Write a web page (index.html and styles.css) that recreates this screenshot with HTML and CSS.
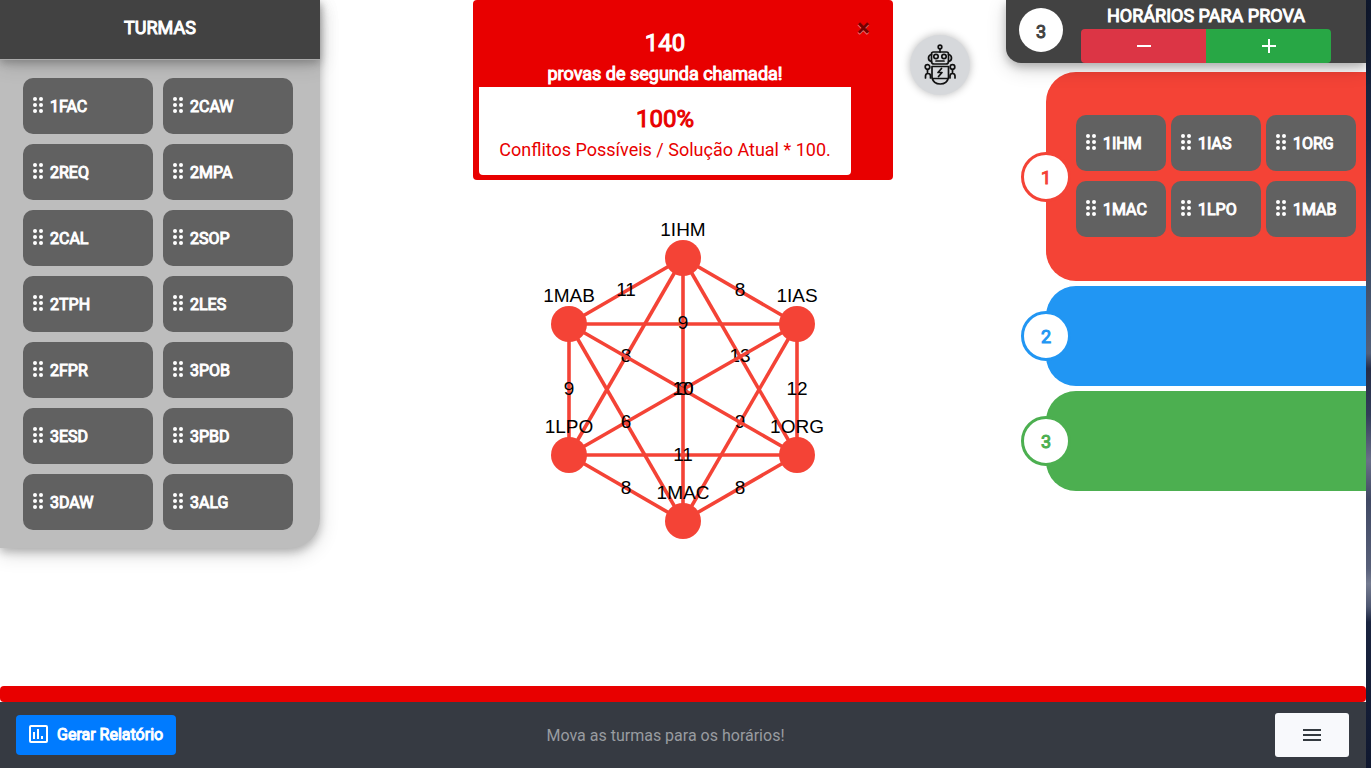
FILE: index.html
```html
<!DOCTYPE html>
<html lang="pt-BR">
<head>
<meta charset="utf-8">
<title>Horários para prova</title>
<link rel="stylesheet" href="styles.css">
</head>
<body>
<svg class="defs" aria-hidden="true">
  <symbol id="grip" viewBox="0 0 10 16">
    <circle cx="2" cy="2" r="2"/><circle cx="8" cy="2" r="2"/>
    <circle cx="2" cy="8" r="2"/><circle cx="8" cy="8" r="2"/>
    <circle cx="2" cy="14" r="2"/><circle cx="8" cy="14" r="2"/>
  </symbol>
</svg>
<div class="page">
  <div class="main">
    <aside class="classes">
      <h2 class="classes-title strong">TURMAS</h2>
      <div class="classes-list">
        <div class="tile strong"><svg class="grip"><use href="#grip"/></svg>1FAC</div>
        <div class="tile strong"><svg class="grip"><use href="#grip"/></svg>2CAW</div>
        <div class="tile strong"><svg class="grip"><use href="#grip"/></svg>2REQ</div>
        <div class="tile strong"><svg class="grip"><use href="#grip"/></svg>2MPA</div>
        <div class="tile strong"><svg class="grip"><use href="#grip"/></svg>2CAL</div>
        <div class="tile strong"><svg class="grip"><use href="#grip"/></svg>2SOP</div>
        <div class="tile strong"><svg class="grip"><use href="#grip"/></svg>2TPH</div>
        <div class="tile strong"><svg class="grip"><use href="#grip"/></svg>2LES</div>
        <div class="tile strong"><svg class="grip"><use href="#grip"/></svg>2FPR</div>
        <div class="tile strong"><svg class="grip"><use href="#grip"/></svg>3POB</div>
        <div class="tile strong"><svg class="grip"><use href="#grip"/></svg>3ESD</div>
        <div class="tile strong"><svg class="grip"><use href="#grip"/></svg>3PBD</div>
        <div class="tile strong"><svg class="grip"><use href="#grip"/></svg>3DAW</div>
        <div class="tile strong"><svg class="grip"><use href="#grip"/></svg>3ALG</div>
      </div>
    </aside>

    <main class="center">
      <div class="top">
        <div class="alert" role="alert">
          <div class="alert-body">
            <p class="big strong">140</p>
            <p class="alert-text strong">provas de segunda chamada!</p>
            <div class="ratio">
              <p class="big strong">100%</p>
              <p class="ratio-text">Conflitos Possíveis / Solução Atual * 100.</p>
            </div>
          </div>
          <button class="close" type="button" aria-label="Fechar">×</button>
        </div>
        <button class="robot" type="button" aria-label="Resolver automaticamente">
          <svg class="robot-icon" viewBox="0 0 32 42" fill="none" stroke="#111" stroke-width="1.7" stroke-linejoin="round" stroke-linecap="round">
            <circle cx="16" cy="3" r="1.8"/><path d="M16 5v3"/>
            <path d="M9.500 8h13q2 0 2 2v7.500q0 2.500-2.500 2.500H10q-2.500 0-2.500-2.500V10q0-2 2-2z"/>
            <path d="M7.500 10.500q-3 .5-3 3.500t3 3.500M24.500 10.500q3 .5 3 3.500t-3 3.500"/>
            <circle cx="12" cy="12.500" r="2.200"/><circle cx="20" cy="12.500" r="2.200"/><path d="M12 17h8"/>
            <path d="M8 22.500h16.500v11q-1.500 6.500-8.250 6.500T8 33.500zM8 34.500h16.500"/>
            <circle cx="3.500" cy="23" r="2.300"/><circle cx="28.500" cy="23" r="2.300"/>
            <path d="M3.500 25.500v4M28.500 25.500v4M1.500 34v-2q0-2.500 2.500-2.500t2.500 2.500v2M26 34v-2q0-2.500 2.500-2.500t2.500 2.500v2"/>
            <path d="M17.500 24.500l-3.500 4h4l-3.500 4"/>
          </svg>
        </button>
      </div>
      <svg class="graph" viewBox="0 0 300 340" role="img" aria-label="Grafo de conflitos">
        <path class="edge" d="M150 48L264 114"/><text x="207" y="86">8</text>
        <path class="edge" d="M150 48L264 245"/><text x="207" y="152">13</text>
        <path class="edge" d="M150 48V311"/><text x="150" y="185">8</text>
        <path class="edge" d="M150 48L36 245"/><text x="93" y="152">8</text>
        <path class="edge" d="M150 48L36 114"/><text x="93" y="86">11</text>
        <path class="edge" d="M264 114V245"/><text x="264" y="185">12</text>
        <path class="edge" d="M264 114L150 311"/><text x="207" y="218">9</text>
        <path class="edge" d="M264 114L36 245"/><text x="150" y="185">10</text>
        <path class="edge" d="M264 114H36"/><text x="150" y="119">9</text>
        <path class="edge" d="M264 245L150 311"/><text x="207" y="284">8</text>
        <path class="edge" d="M264 245H36"/><text x="150" y="251">11</text>
        <path class="edge" d="M264 245L36 114"/><text x="150" y="185">10</text>
        <path class="edge" d="M150 311L36 245"/><text x="93" y="284">8</text>
        <path class="edge" d="M150 311L36 114"/><text x="93" y="218">6</text>
        <path class="edge" d="M36 245V114"/><text x="36" y="185">9</text>
        <circle class="node" cx="150" cy="48" r="18"/><text x="150" y="26">1IHM</text>
        <circle class="node" cx="264" cy="114" r="18"/><text x="264" y="92">1IAS</text>
        <circle class="node" cx="264" cy="245" r="18"/><text x="264" y="223">1ORG</text>
        <circle class="node" cx="150" cy="311" r="18"/><text x="150" y="289">1MAC</text>
        <circle class="node" cx="36" cy="245" r="18"/><text x="36" y="223">1LPO</text>
        <circle class="node" cx="36" cy="114" r="18"/><text x="36" y="92">1MAB</text>
      </svg>
    </main>

    <aside class="hours">
      <header class="hours-head">
        <span class="count strong">3</span>
        <div class="hours-control">
          <h2 class="hours-title strong">HORÁRIOS PARA PROVA</h2>
          <div class="group">
            <button class="minus" type="button" aria-label="Remover horário"><svg class="sign" viewBox="0 0 14 14"><path d="M0 7h14"/></svg></button>
            <button class="plus" type="button" aria-label="Adicionar horário"><svg class="sign" viewBox="0 0 14 14"><path d="M0 7h14M7 0v14"/></svg></button>
          </div>
        </div>
      </header>
      <div class="slots">
        <section class="slot red">
          <span class="badge strong">1</span>
          <div class="tile strong"><svg class="grip"><use href="#grip"/></svg>1IHM</div>
          <div class="tile strong"><svg class="grip"><use href="#grip"/></svg>1IAS</div>
          <div class="tile strong"><svg class="grip"><use href="#grip"/></svg>1ORG</div>
          <div class="tile strong"><svg class="grip"><use href="#grip"/></svg>1MAC</div>
          <div class="tile strong"><svg class="grip"><use href="#grip"/></svg>1LPO</div>
          <div class="tile strong"><svg class="grip"><use href="#grip"/></svg>1MAB</div>
        </section>
        <section class="slot blue"><span class="badge strong">2</span></section>
        <section class="slot green"><span class="badge strong">3</span></section>
      </div>
    </aside>
  </div>

  <div class="progress"></div>
  <footer class="footer">
    <button class="report strong" type="button">
      <svg class="chart" viewBox="0 0 20 20"><rect x="2" y="1" width="17" height="16" rx="1" fill="none" stroke="#fff" stroke-width="2"/><path d="M5 7h2v7H5zM9 4h2v10H9zM13 11h2v3h-2z" fill="#fff"/></svg>
      Gerar Relatório
    </button>
    <p class="hint">Mova as turmas para os horários!</p>
    <button class="menu" type="button" aria-label="Menu"><svg class="bars" viewBox="0 0 18 12"><path d="M0 1h18M0 6h18M0 11h18"/></svg></button>
  </footer>
</div>
<div class="desktop"></div>
</body>
</html>
```

FILE: styles.css
```css
* { box-sizing: border-box; }
body {
  margin: 0;
  min-height: 100vh;
  display: flex;
  font: 16px/24px Roboto, "Liberation Sans", sans-serif;
  background: #fff;
}
h2, p { margin: 0; }
button { border: 0; padding: 0; font: inherit; cursor: pointer; }
.defs { position: absolute; width: 0; height: 0; }
.strong { font-weight: 400; -webkit-text-stroke: 1px currentColor; }

.page { flex: 1; display: flex; flex-direction: column; }
.desktop {
  width: 5px;
  background: linear-gradient(#10192f 0%, #1c2a47 18%, #34445f 30%, #53607a 46%, #252c48 48%, #323d59 54%, #6a7089 60%, #404964 65%, #586079 74%, #747b90 76%, #4e5771 79%, #1a2440 81%, #10182f 100%);
}
.main { flex: 1; display: grid; grid-template-columns: 320px 1fr 360px; align-items: start; }

.classes {
  background: #bdbdbd;
  border-radius: 0 0 30px 0;
  box-shadow: 0 4px 8px rgba(0,0,0,.22), 0 6px 20px rgba(0,0,0,.16);
}
.classes-title {
  height: 59px;
  padding-top: 16px;
  background: #424242;
  color: #fff;
  font-size: 18px;
  line-height: 24px;
  text-align: center;
  box-shadow: 0 1px 0 #aaa, 0 4px 8px rgba(0,0,0,.22), 0 6px 20px rgba(0,0,0,.16);
}
.classes-list {
  display: grid;
  grid-template-columns: 1fr 1fr;
  gap: 10px;
  padding: 19px 27px 18px 23px;
}
.tile {
  display: flex;
  align-items: center;
  gap: 7px;
  height: 56px;
  padding: 1px 10px 0;
  border-radius: 10px;
  background: #616161;
  color: #fff;
}
.grip { width: 10px; height: 16px; fill: #fff; margin-bottom: 3px; }

.center { display: flex; flex-direction: column; padding-left: 40px; }
.top { display: grid; grid-template-columns: 1fr 420px 1fr; }
.alert {
  grid-column: 2;
  display: flex;
  padding: 30px 20px 5px 6px;
  border-radius: 4px;
  background: #e80000;
  color: #fff;
}
.alert-body { width: 372px; text-align: center; }
.big { font-size: 24px; line-height: 26px; }
.alert-text { padding: 5px 0 1px; line-height: 25px; font-size: 18px; }
.ratio { padding: 19px 0 12px; border-radius: 0 0 4px 4px; background: #fff; color: #e80000; }
.ratio-text { padding-top: 4px; line-height: 27px; font-size: 18px; }
.close {
  align-self: flex-start;
  margin: -14px 0 0 6px;
  background: none;
  color: #000;
  font-size: 24px;
  font-weight: 700;
  opacity: .5;
  text-shadow: 0 1px 0 #fff;
}
.robot {
  width: 60px;
  height: 60px;
  margin: 35px 0 0 17px;
  display: grid;
  place-items: center;
  border-radius: 50%;
  background: #d6d8db;
  box-shadow: 0 0 8px rgba(0,0,0,.28);
}
.robot-icon { width: 32px; height: 42px; }
.graph { align-self: center; width: 300px; height: 340px; margin-top: 30px; }
.graph text { font: 19px "Liberation Sans", Arial, sans-serif; text-anchor: middle; fill: #000; }
.edge { stroke: #f44336; stroke-width: 3.6; fill: none; }
.node { fill: #f44336; }

.hours-head {
  position: relative;
  z-index: 1;
  display: flex;
  gap: 18px;
  height: 63px;
  padding-left: 13px;
  border-radius: 0 0 0 15px;
  background: #424242;
  box-shadow: 0 4px 8px rgba(0,0,0,.22), 0 6px 20px rgba(0,0,0,.16);
}
.count {
  width: 44px;
  height: 44px;
  margin-top: 8px;
  border-radius: 50%;
  background: #fff;
  color: #424242;
  font-size: 18px;
  line-height: 48px;
  text-align: center;
}
.hours-control { width: 250px; }
.hours-title { padding-top: 3px; color: #fff; font-size: 18px; line-height: 26px; text-align: center; }
.group { display: grid; grid-template-columns: 1fr 1fr; height: 34px; border-radius: 4px; overflow: hidden; }
.minus { background: #dc3545; }
.plus { background: #28a745; }
.sign { width: 14px; height: 14px; stroke: #fff; stroke-width: 2; }
.minus, .plus { display: grid; place-items: center; }

.slots { display: grid; gap: 5px; padding: 9px 0 0 40px; }
.slot {
  position: relative;
  display: grid;
  grid-template-columns: repeat(3, 1fr);
  gap: 10px 5px;
  min-height: 100px;
  padding: 43px 10px 44px 30px;
  border-radius: 30px 0 0 30px;
  background: currentColor;
}
.red { color: #f44336; }
.blue { color: #2196f3; }
.green { color: #4caf50; }
.badge {
  position: absolute;
  left: -25px;
  top: calc(50% - 25px);
  width: 50px;
  height: 50px;
  border: 3px solid currentColor;
  border-radius: 50%;
  background: #fff;
  font-size: 18px;
  line-height: 46px;
  text-align: center;
}

.progress { height: 16px; border-radius: 4px; background: #e80000; }
.footer {
  display: grid;
  grid-template-columns: 1fr auto 1fr;
  align-items: center;
  height: 66px;
  padding: 0 17px 0 16px;
  background: #363a42;
}
.report {
  display: flex;
  align-items: center;
  gap: 9px;
  width: 160px;
  height: 40px;
  padding-left: 12px;
  border-radius: 4px;
  background: #007bff;
  color: #fff;
}
.chart { width: 20px; height: 20px; }
.hint { padding: 2px 34px 0 0; color: #999ca0; }
.menu {
  justify-self: end;
  display: grid;
  place-items: center;
  width: 74px;
  height: 44px;
  border-radius: 3px;
  background: #f8f9fc;
}
.bars { width: 18px; height: 12px; stroke: #343a40; stroke-width: 2; }
```
